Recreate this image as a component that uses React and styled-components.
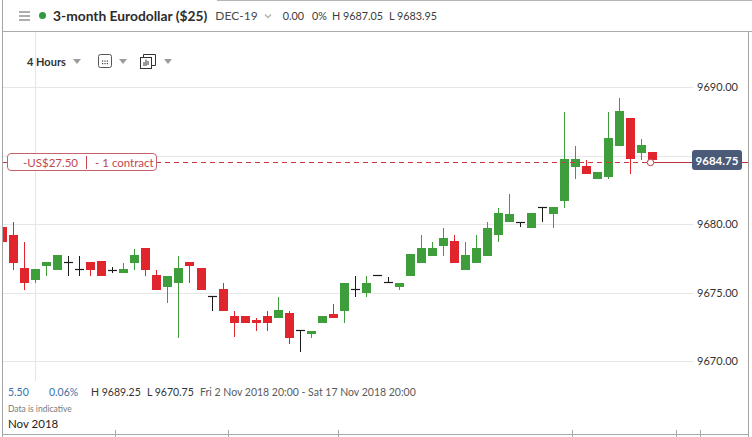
import React from 'react';
import styled, { createGlobalStyle } from 'styled-components';

const GlobalStyle = createGlobalStyle`
  html, body {
    margin: 0;
    padding: 0;
    background: #fff;
  }
  body {
    font-family: Lato, "Open Sans", Arial, sans-serif;
    color: #333;
  }
`;

// candles in chart pixels: [kind, bodyTop, bodyBottom, wickTop, wickBottom]
// kind: g = up, r = down, d = doji (body top is the tick line)
const CANDLES = [
  ['r', 227, 242, 222, 242],
  ['r', 235, 263, 222, 270],
  ['r', 268, 283, 242, 290],
  ['g', 269, 280, 269, 283],
  ['g', 262, 266, 262, 276],
  ['g', 255, 270, 255, 270],
  ['d', 262, 262, 256, 276],
  ['d', 269, 269, 256, 276],
  ['r', 262, 270, 262, 276],
  ['r', 261, 276, 261, 276],
  ['d', 270, 270, 267, 273],
  ['g', 269, 273, 263, 273],
  ['g', 255, 263, 249, 270],
  ['r', 248, 270, 248, 276],
  ['r', 275, 290, 270, 290],
  ['g', 276, 287, 276, 303],
  ['g', 268, 283, 256, 338],
  ['r', 262, 266, 262, 283],
  ['r', 268, 290, 268, 290],
  ['d', 296, 296, 296, 311],
  ['r', 289, 311, 283, 311],
  ['r', 316, 323, 311, 337],
  ['r', 316, 323, 316, 323],
  ['r', 320, 323, 318, 331],
  ['r', 316, 323, 311, 331],
  ['g', 310, 318, 297, 318],
  ['r', 313, 338, 311, 344],
  ['d', 330, 330, 330, 352],
  ['g', 331, 334, 331, 338],
  ['g', 316, 323, 316, 323],
  ['r', 314, 318, 304, 318],
  ['g', 283, 311, 283, 323],
  ['d', 289, 289, 276, 297],
  ['g', 283, 293, 276, 297],
  ['d', 275, 275, 275, 275],
  ['d', 282, 282, 277, 282],
  ['g', 283, 287, 283, 290],
  ['g', 254, 276, 254, 276],
  ['g', 248, 263, 235, 263],
  ['g', 248, 256, 242, 256],
  ['g', 238, 246, 228, 256],
  ['r', 241, 263, 235, 263],
  ['g', 255, 270, 242, 270],
  ['g', 248, 263, 235, 263],
  ['g', 228, 256, 222, 256],
  ['g', 213, 235, 208, 242],
  ['g', 214, 222, 194, 222],
  ['d', 222, 222, 222, 227],
  ['g', 213, 228, 213, 228],
  ['d', 207, 207, 207, 222],
  ['g', 207, 214, 207, 228],
  ['g', 159, 201, 112, 208],
  ['g', 159, 167, 146, 179],
  ['r', 166, 174, 160, 174],
  ['g', 172, 179, 172, 179],
  ['g', 138, 177, 112, 179],
  ['g', 111, 146, 98, 146],
  ['r', 118, 159, 118, 174],
  ['g', 145, 153, 139, 160],
  ['r', 152, 160, 152, 160],
];

const COLORS = { g: '#3d9e3b', r: '#e0262c', d: '#1a1a1a' };

const GRID = [
  { y: 87, label: '9690.00' },
  { y: 156, label: null },
  { y: 224, label: '9680.00' },
  { y: 293, label: '9675.00' },
  { y: 361, label: '9670.00' },
];

const TICKS = [115, 228, 338, 572, 676, 700];

const Page = styled.div`
  width: 752px;
  height: 437px;
  padding-left: 2px;
  box-sizing: border-box;
  overflow: hidden;
  background: #fff;
`;

const Shell = styled.div`
  height: 100%;
  border-left: 1px solid #a3a3a3;
  display: flex;
  flex-direction: column;
`;

const TopBar = styled.div`
  height: 31px;
  flex: none;
  display: flex;
  align-items: center;
  padding-left: 16px;
  border-bottom: 1px solid #ababab;
  background: linear-gradient(#b5b5b5, #b5b5b5) no-repeat 214px 0 / calc(100% - 214px) 1px;
  white-space: nowrap;
`;

const Dot = styled.span`
  width: 7px;
  height: 7px;
  border-radius: 50%;
  background: #2f9b3c;
  margin: 0 7px 0 9px;
`;

const Title = styled.span`
  font-size: 13.8px;
  font-weight: 700;
  color: #2c2c2c;
`;

const Expiry = styled.span`
  font-size: 12px;
  color: #4a4a4a;
  margin-left: 8px;
`;

const Quote = styled.span`
  font-size: 10.8px;
  color: #3c3c3c;
  margin-left: ${(p) => p.$gap || 6}px;
`;

const Body = styled.div`
  flex: 1;
  display: flex;
`;

const ChartArea = styled.div`
  position: relative;
  width: 745px;
  border-right: 1px solid #a3a3a3;
  display: flex;
  flex-direction: column;
  justify-content: space-between;
`;

const Canvas = styled.svg`
  position: absolute;
  inset: 0;
  z-index: 0;
`;

const Toolbar = styled.div`
  position: relative;
  z-index: 1;
  display: flex;
  align-items: center;
  height: 18px;
  margin-top: 20px;
  padding-left: 24px;
`;

const Interval = styled.span`
  font-size: 11px;
  font-weight: 700;
  color: #333;
`;

const Caret = styled.span`
  width: 0;
  height: 0;
  border-left: 4px solid transparent;
  border-right: 4px solid transparent;
  border-top: 5px solid #9c9c9c;
  margin: 0 ${(p) => p.$after || 0}px 0 ${(p) => p.$before || 7}px;
`;

const OrderTag = styled.div`
  position: absolute;
  left: 4px;
  top: 121px;
  z-index: 1;
  width: 150px;
  height: 18px;
  box-sizing: border-box;
  padding-left: 15px;
  display: flex;
  align-items: center;
  gap: 8px;
  border: 1px solid #c8626a;
  border-radius: 4px;
  background: #fff;
  color: #c24750;
  font-size: 11.5px;
  white-space: nowrap;
`;

const Divider = styled.span`
  width: 1px;
  height: 13px;
  background: #c24750;
`;

const PriceTag = styled.div`
  position: absolute;
  left: 689px;
  top: 118px;
  z-index: 1;
  width: 50px;
  height: 20px;
  border-radius: 3px;
  background: #4b5a77;
  color: #fff;
  font-size: 11.5px;
  font-weight: 700;
  display: flex;
  align-items: center;
  justify-content: center;
`;

const Footer = styled.div`
  position: relative;
  z-index: 1;
  padding: 0 0 5px 5px;
`;

const StatsRow = styled.div`
  display: flex;
  height: 16px;
  align-items: center;
  font-size: 10.5px;
  white-space: nowrap;
`;

const Stat = styled.span`
  min-width: ${(p) => p.$w || 0}px;
  color: ${(p) => (p.$blue ? '#3a6fa7' : p.$muted ? '#5a5a5a' : '#333')};
`;

const Note = styled.div`
  height: 14px;
  line-height: 14px;
  font-size: 8.5px;
  color: #7a7a7a;
  margin-top: 2px;
`;

const Month = styled.div`
  height: 16px;
  line-height: 16px;
  font-size: 11.5px;
  color: #222;
`;

const Hamburger = () => (
  <svg width="11" height="10" viewBox="0 0 11 10">
    <g stroke="#8a8a8a" strokeWidth="1.4">
      <line x1="0" y1="1" x2="11" y2="1" />
      <line x1="0" y1="5" x2="11" y2="5" />
      <line x1="0" y1="9" x2="11" y2="9" />
    </g>
  </svg>
);

const Chevron = () => (
  <svg width="8" height="6" viewBox="0 0 8 6" style={{ marginLeft: 6 }}>
    <polyline points="1,1.5 4,4.5 7,1.5" fill="none" stroke="#b0b0b0" strokeWidth="1.3" />
  </svg>
);

const LayoutIcon = () => (
  <svg width="14" height="14" viewBox="0 0 14 14" style={{ marginLeft: 17 }}>
    <rect x="0.5" y="0.5" width="13" height="13" rx="2" fill="none" stroke="#555" />
    <g fill="#444">
      <rect x="4" y="6.5" width="1.2" height="1.2" />
      <rect x="6.4" y="6.5" width="1.2" height="1.2" />
      <rect x="8.8" y="6.5" width="1.2" height="1.2" />
      <rect x="4" y="9" width="1.2" height="1.2" />
      <rect x="6.4" y="9" width="1.2" height="1.2" />
      <rect x="8.8" y="9" width="1.2" height="1.2" />
    </g>
  </svg>
);

const ChartTypeIcon = () => (
  <svg width="16" height="15" viewBox="0 0 16 15" style={{ marginLeft: 13 }}>
    <g fill="none" stroke="#333" strokeWidth="1">
      <path d="M3.5 3 V0.5 H15.5 V11.5 H12" />
      <rect x="0.5" y="3.5" width="11" height="11" />
      <line x1="4" y1="8" x2="4" y2="12" />
      <line x1="6" y1="5.5" x2="6" y2="12" />
      <line x1="8" y1="7" x2="8" y2="11" />
    </g>
  </svg>
);

const Candles = () =>
  CANDLES.map(([kind, top, bot, wt, wb], k) => {
    const left = Math.round(-1.8 + 11.017 * k);
    const cx = left + 4.5;
    const color = COLORS[kind];
    return (
      <g key={k}>
        {wb > wt && <line x1={cx} x2={cx} y1={wt} y2={wb} stroke={color} strokeWidth="1" />}
        {kind === 'd' ? (
          <line x1={left} x2={left + 9} y1={top + 0.5} y2={top + 0.5} stroke={color} strokeWidth="1.2" />
        ) : (
          <rect x={left} y={top} width="9" height={Math.max(bot - top, 1)} fill={color} />
        )}
      </g>
    );
  });

const Chart = () => (
  <Canvas width="745" height="405" viewBox="3 32 745 405">
    {GRID.map((g) => (
      <line key={g.y} x1="3" x2="693" y1={g.y + 0.5} y2={g.y + 0.5} stroke="#e6e6e6" />
    ))}
    <line x1="35.5" x2="35.5" y1="32" y2="381" stroke="#e6e6e6" />
    {GRID.filter((g) => g.label).map((g) => (
      <text key={g.label} x="738" y={g.y + 4} textAnchor="end" fontSize="11" fill="#333"
        fontFamily="Lato, Arial, sans-serif">
        {g.label}
      </text>
    ))}
    <Candles />
    <line x1="3" x2="647" y1="162.5" y2="162.5" stroke="#c93a41" strokeDasharray="5 4" />
    <line x1="654" x2="748" y1="162.5" y2="162.5" stroke="#b8333a" />
    <circle cx="650.5" cy="162.5" r="3.2" fill="#fff" stroke="#c93a41" />
    <line x1="3" x2="748" y1="434.5" y2="434.5" stroke="#a8a8a8" />
    {TICKS.map((x) => (
      <line key={x} x1={x + 0.5} x2={x + 0.5} y1="430" y2="437" stroke="#a8a8a8" />
    ))}
  </Canvas>
);

export default function App() {
  return (
    <>
      <GlobalStyle />
      <Page>
        <Shell>
          <TopBar>
            <Hamburger />
            <Dot />
            <Title>3-month Eurodollar ($25)</Title>
            <Expiry>DEC-19</Expiry>
            <Chevron />
            <Quote $gap={11}>0.00</Quote>
            <Quote $gap={8}>0%</Quote>
            <Quote $gap={5}>H 9687.05</Quote>
            <Quote $gap={6}>L 9683.95</Quote>
          </TopBar>
          <Body>
            <ChartArea>
              <Chart />
              <Toolbar>
                <Interval>4 Hours</Interval>
                <Caret />
                <LayoutIcon />
                <Caret $before={7} />
                <ChartTypeIcon />
                <Caret $before={8} />
              </Toolbar>
              <OrderTag>
                <span>-US$27.50</span>
                <Divider />
                <span>- 1 contract</span>
              </OrderTag>
              <PriceTag>9684.75</PriceTag>
              <Footer>
                <StatsRow>
                  <Stat $blue $w={41}>5.50</Stat>
                  <Stat $blue $w={42}>0.06%</Stat>
                  <Stat $w={56}>H 9689.25</Stat>
                  <Stat $w={53}>L 9670.75</Stat>
                  <Stat $muted>Fri 2 Nov 2018 20:00 - Sat 17 Nov 2018 20:00</Stat>
                </StatsRow>
                <Note>Data is indicative</Note>
                <Month>Nov 2018</Month>
              </Footer>
            </ChartArea>
          </Body>
        </Shell>
      </Page>
    </>
  );
}
